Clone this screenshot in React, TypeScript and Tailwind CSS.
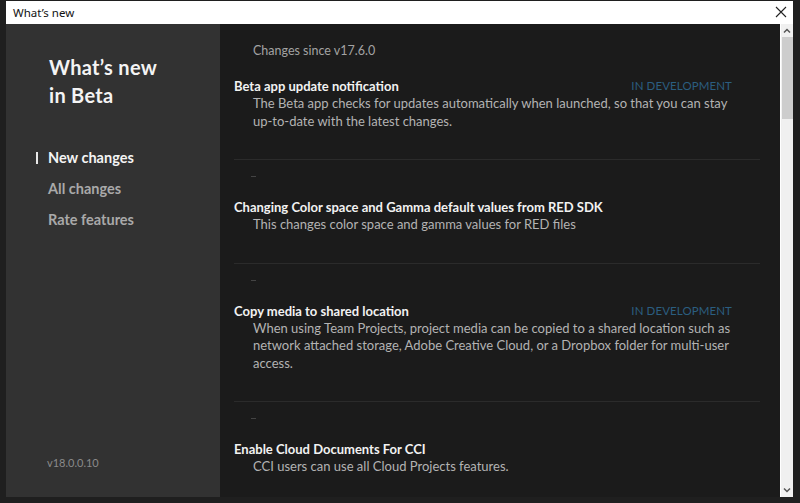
import React from "react";

const FONT = { fontFamily: "Lato, 'Open Sans', 'Noto Sans', sans-serif" };

type Change = { title: string; lines: string[]; dev?: boolean };

const CHANGES: Change[] = [
  {
    title: "Beta app update notification",
    dev: true,
    lines: [
      "The Beta app checks for updates automatically when launched, so that you can stay",
      "up-to-date with the latest changes.",
    ],
  },
  {
    title: "Changing Color space and Gamma default values from RED SDK",
    lines: ["This changes color space and gamma values for RED files"],
  },
  {
    title: "Copy media to shared location",
    dev: true,
    lines: [
      "When using Team Projects, project media can be copied to a shared location such as",
      "network attached storage, Adobe Creative Cloud, or a Dropbox folder for multi-user",
      "access.",
    ],
  },
  {
    title: "Enable Cloud Documents For CCI",
    lines: ["CCI users can use all Cloud Projects features."],
  },
];

function ChangeItem({ item, last }: { item: Change; last: boolean }) {
  return (
    <div>
      <div className="flex items-center justify-between pr-[48px] h-[18px]">
        <h3 className="text-[13px] font-bold text-[#f2f2f2] leading-[18px]">{item.title}</h3>
        {item.dev && <span className="text-[11.5px] text-[#2b5e80] tracking-[0.1px]">IN DEVELOPMENT</span>}
      </div>
      <div className="pl-[19px] text-[13px] leading-[17.5px] text-[#b3b3b3]">
        {item.lines.map((l) => (
          <div key={l} className="whitespace-nowrap">{l}</div>
        ))}
      </div>
      {!last && (
        <>
          <div className="mt-[29px] h-px bg-[#2b2b2b] mr-[20px]" />
          <div className="pl-[17px] mt-[16px] h-[2px]">
            <div className="w-[5px] h-px bg-[#444]" />
          </div>
          <div className="h-[20px]" />
        </>
      )}
    </div>
  );
}

export default function App() {
  return (
    <div className="w-[800px] h-[503px] bg-[#1f1f1f] pl-[6px] pt-px overflow-hidden" style={FONT}>
      <div className="w-[787px] h-[496px] bg-white flex flex-col">
        <div className="h-[23px] flex items-center justify-between pl-[7px] pr-[6px]">
          <span className="text-[11.5px] text-[#111]" style={{ fontFamily: "'Noto Sans', 'Open Sans', sans-serif" }}>
            What’s new
          </span>
          <svg width="12" height="12" viewBox="0 0 12 12" className="mb-px">
            <path d="M1 1 L11 11 M11 1 L1 11" stroke="#222" strokeWidth="1.1" />
          </svg>
        </div>
        <div className="flex flex-1 min-h-0">
          <aside className="w-[214px] bg-[#323232] flex flex-col pt-[29px] pb-[26px]">
            <h1 className="pl-[43px] text-[20px] font-bold leading-[28px] text-[#f4f4f4] tracking-[0.3px]">
              What’s new
              <br />
              in Beta
            </h1>
            <nav className="mt-[40px] flex flex-col gap-[13px] text-[14.5px] font-bold leading-[18px]">
              <div className="flex items-center">
                <span className="ml-[30px] w-[2px] h-[12px] bg-[#e8e8e8]" />
                <span className="ml-[10px] text-[#f4f4f4]">New changes</span>
              </div>
              <span className="pl-[42px] text-[#a9a9a9]">All changes</span>
              <span className="pl-[42px] text-[#a9a9a9]">Rate features</span>
            </nav>
            <div className="mt-auto pl-[41px] text-[11px] text-[#8a8a8a]">v18.0.0.10</div>
          </aside>
          <main className="w-[560px] bg-[#1b1b1b] pl-[14px] pt-[18px] overflow-hidden">
            <div className="pl-[19px] text-[12.5px] text-[#a3a3a3] leading-[17px]">Changes since v17.6.0</div>
            <div className="mt-[18px]">
              {CHANGES.map((c, i) => (
                <ChangeItem key={c.title} item={c} last={i === CHANGES.length - 1} />
              ))}
            </div>
          </main>
          <div className="w-[13px] bg-[#f0f0f0] flex flex-col items-center border-l border-white">
            <svg width="8" height="6" viewBox="0 0 8 6" className="mt-[4px]">
              <path d="M1 4.5 L4 1.5 L7 4.5" stroke="#555" strokeWidth="1.5" fill="none" />
            </svg>
            <div className="mt-[3px] w-[11px] h-[82px] bg-[#cdcdcd]" />
            <div className="flex-1" />
            <svg width="8" height="6" viewBox="0 0 8 6" className="mb-[4px]">
              <path d="M1 1.5 L4 4.5 L7 1.5" stroke="#555" strokeWidth="1.5" fill="none" />
            </svg>
          </div>
        </div>
      </div>
    </div>
  );
}
